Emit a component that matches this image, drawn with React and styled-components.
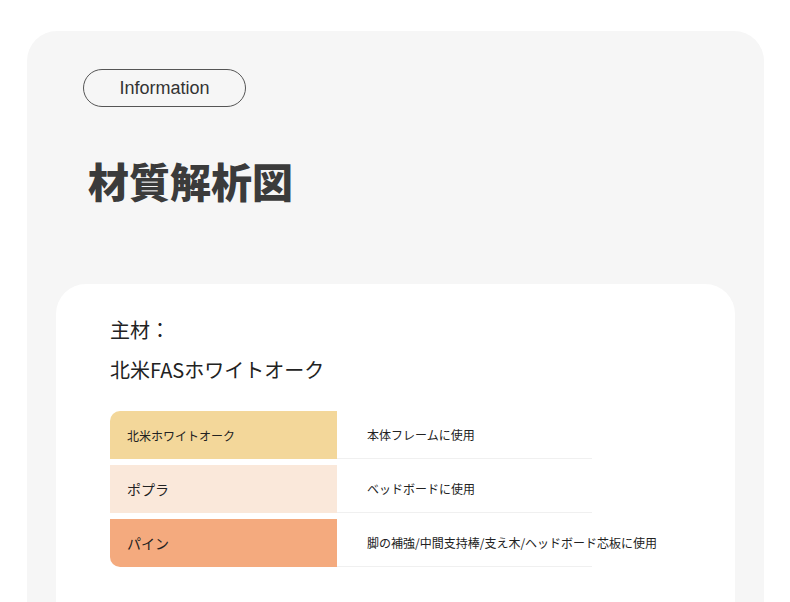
import React from 'react';
import styled, { createGlobalStyle } from 'styled-components';

const GlobalStyle = createGlobalStyle`
  html, body {
    margin: 0;
    padding: 0;
    background: #ffffff;
    overflow: hidden;
  }
  body {
    font-family: "Noto Sans CJK JP", "Noto Sans", sans-serif;
  }
`;

const rows = [
  { name: '北米ホワイトオーク', use: '本体フレームに使用', color: '#f3d79a', small: true },
  { name: 'ポプラ', use: 'ベッドボードに使用', color: '#fae8da' },
  { name: 'パイン', use: '脚の補強/中間支持棒/支え木/ヘッドボード芯板に使用', color: '#f4aa7e' },
];

const App = () => {
  return (
    <Page>
      <GlobalStyle />
      <OuterCard>
        <Pill>Information</Pill>
        <Title>材質解析図</Title>
        <InnerCard>
          <Label>主材：</Label>
          <Material>北米FASホワイトオーク</Material>
          <Table>
            {rows.map((r, i) => (
              <Row key={r.name}>
                <NameCell $bg={r.color} $first={i === 0} $last={i === rows.length - 1} $small={r.small}>
                  {r.name}
                </NameCell>
                <UseCell>{r.use}</UseCell>
              </Row>
            ))}
          </Table>
        </InnerCard>
      </OuterCard>
    </Page>
  );
};

const Page = styled.div`
  width: 790px;
  height: 602px;
  padding-top: 31px;
  padding-left: 27px;
  box-sizing: border-box;
`;

const OuterCard = styled.div`
  width: 737px;
  min-height: 700px;
  background: #f6f6f6;
  border-radius: 30px;
  padding: 38px 29px 0 56px;
  box-sizing: border-box;
  display: flex;
  flex-direction: column;
  align-items: flex-start;
`;

const Pill = styled.div`
  width: 163px;
  height: 38px;
  box-sizing: border-box;
  border: 1px solid #555;
  border-radius: 19px;
  display: flex;
  align-items: center;
  justify-content: center;
  font-family: "Liberation Sans", Arial, sans-serif;
  font-size: 18px;
  color: #333;
`;

const Title = styled.h1`
  margin: 49px 0 0 5px;
  font-size: 41px;
  line-height: 49px;
  font-weight: 900;
  color: #3b3b3b;
  letter-spacing: 0;
`;

const InnerCard = styled.div`
  align-self: stretch;
  margin: 79px 0 0 -27px;
  background: #ffffff;
  border-radius: 30px;
  padding: 31px 0 40px 54px;
  min-height: 400px;
  box-sizing: border-box;
`;

const Label = styled.div`
  font-size: 20px;
  line-height: 30px;
  color: #222;
`;

const Material = styled.div`
  margin-top: 10px;
  font-size: 20px;
  line-height: 30px;
  color: #222;
`;

const Table = styled.div`
  margin-top: 26px;
  display: flex;
  flex-direction: column;
  gap: 6px;
`;

const Row = styled.div`
  display: flex;
  height: 48px;
`;

const NameCell = styled.div`
  width: 227px;
  flex-shrink: 0;
  background: ${p => p.$bg};
  border-top-left-radius: ${p => (p.$first ? '10px' : '0')};
  border-bottom-left-radius: ${p => (p.$last ? '10px' : '0')};
  display: flex;
  align-items: center;
  padding-left: 17px;
  box-sizing: border-box;
  font-size: ${p => (p.$small ? '12px' : '14px')};
  color: #222;
`;

const UseCell = styled.div`
  width: 255px;
  flex-shrink: 0;
  border-bottom: 1px solid #f0f0f0;
  display: flex;
  align-items: center;
  padding-left: 30px;
  box-sizing: border-box;
  font-size: 12px;
  color: #222;
  white-space: nowrap;
`;

export default App;
